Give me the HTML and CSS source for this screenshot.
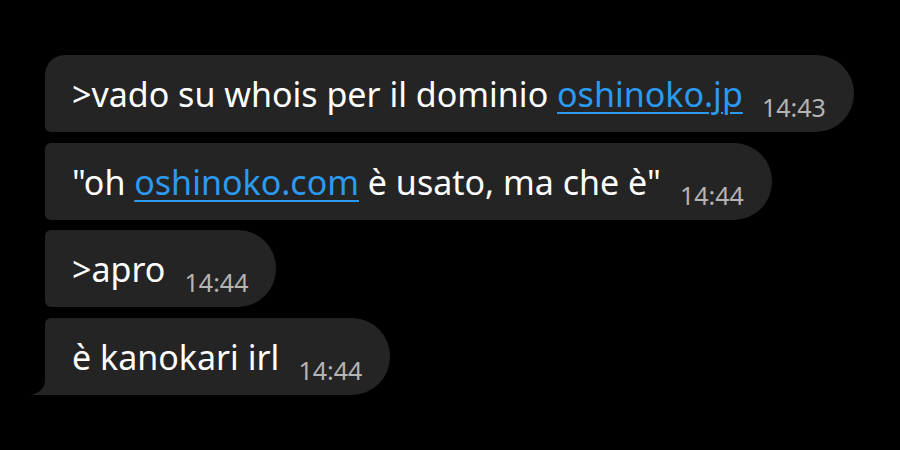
FILE: index.html
```html
<!DOCTYPE html>
<html lang="it">
<head>
    <meta charset="UTF-8">
    <title>Chat</title>
    <link rel="stylesheet" href="styles.css">
</head>
<body>
    <div class="chat">
        <div class="bubble first">
            <span class="text">&gt;vado su whois per il dominio <a href="#">oshinoko.jp</a></span>
            <span class="time">14:43</span>
        </div>
        <div class="bubble">
            <span class="text">"oh <a href="#">oshinoko.com</a> è usato, ma che è"</span>
            <span class="time">14:44</span>
        </div>
        <div class="bubble">
            <span class="text">&gt;apro</span>
            <span class="time">14:44</span>
        </div>
        <div class="bubble last">
            <svg class="tail" width="16" height="16" viewBox="0 0 16 16">
                <path d="M14 0 L16 0 L16 16 L0 16 C8 14 14 10 14 0 Z" fill="#242424"/>
            </svg>
            <span class="text">è kanokari irl</span>
            <span class="time">14:44</span>
        </div>
    </div>
</body>
</html>
```

FILE: styles.css
```css
body {
    margin: 0;
    background: #000;
    font-family: "Noto Sans", "Open Sans", sans-serif;
    color: #fff;
}

.chat {
    display: flex;
    flex-direction: column;
    align-items: flex-start;
    gap: 10.5px;
    padding: 55px 0 0 45px;
}

.bubble {
    position: relative;
    box-sizing: border-box;
    height: 77px;
    padding: 0 28px 0 27px;
    background: #242424;
    border-radius: 6px 38px 38px 6px;
    line-height: 78px;
    white-space: nowrap;
}
.bubble.first {
    border-top-left-radius: 20px;
}
.bubble.last {
    border-bottom-left-radius: 0;
}

.text {
    font-size: 34px;
}
.text a {
    color: #2b9af0;
    text-decoration: underline;
    text-decoration-thickness: 2px;
    text-underline-offset: 5px;
}

.time {
    font-size: 25px;
    color: #b4b4b4;
    margin-left: 15px;
    vertical-align: -10px;
}

/* tail of the last bubble in a group */
.tail {
    position: absolute;
    left: -14px;
    bottom: 0;
    display: block;
}
```
